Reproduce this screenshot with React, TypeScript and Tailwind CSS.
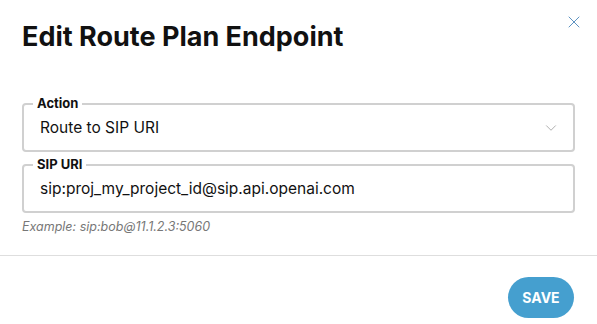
import { ChevronDown, X } from "lucide-react";

function Field({ label, children }: { label: string; children: React.ReactNode }) {
  return (
    <div className="relative h-[49px] rounded-[4px] border-2 border-[#d0d0d0] flex items-center pl-[16px] pr-[13px]">
      <span className="absolute left-[9px] top-[-10px] bg-white px-[4px] text-[13px] font-bold leading-[16px] text-[#111]">
        {label}
      </span>
      {children}
    </div>
  );
}

export default function App() {
  return (
    <div
      className="w-[597px] h-[324px] bg-white flex flex-col"
      style={{ fontFamily: "Inter, 'Noto Sans', sans-serif" }}
    >
      <div className="flex items-start justify-between pl-[22px] pr-[13px] pt-[21px] h-[80px]">
        <h2 className="text-[27px] font-bold leading-[32px] text-[#111]">
          Edit Route Plan Endpoint
        </h2>
        <button className="mt-[-9px] text-[#3c7db5]">
          <X size={20} strokeWidth={1} />
        </button>
      </div>

      <div className="flex flex-col px-[22px] pt-[23px]">
        <Field label="Action">
          <div className="flex flex-1 items-center justify-between">
            <span className="text-[15.5px] text-[#111]">Route to SIP URI</span>
            <ChevronDown size={18} strokeWidth={0.9} className="text-[#888]" />
          </div>
        </Field>
        <div className="mt-[12px]">
          <Field label="SIP URI">
            <span className="text-[15.5px] text-[#111]">
              sip:proj_my_project_id@sip.api.openai.com
            </span>
          </Field>
        </div>
        <p className="mt-[6px] text-[12.5px] italic text-[#777] leading-[16px]">
          Example: sip:bob@11.1.2.3:5060
        </p>
      </div>

      <div className="mt-auto border-t border-[#dedede] h-[69px] flex items-start justify-end pt-[21px] pr-[23px]">
        <button className="h-[41px] w-[66px] rounded-full bg-[#459fcf] text-white text-[14px] font-bold">
          SAVE
        </button>
      </div>
    </div>
  );
}
